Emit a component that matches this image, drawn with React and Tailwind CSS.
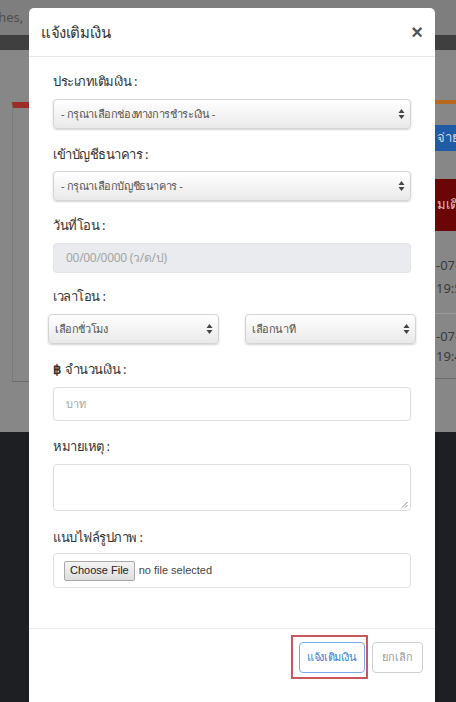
import React from 'react';

const font = { fontFamily: '"Noto Sans", "Liberation Sans", sans-serif' };

const Arrows = () => (
  <svg width="7" height="11" viewBox="0 0 7 11" className="absolute right-[5px] top-1/2 -translate-y-1/2">
    <path d="M3.5 0.5 L6.5 4.5 L0.5 4.5 Z" fill="#444" />
    <path d="M3.5 10.5 L6.5 6.5 L0.5 6.5 Z" fill="#444" />
  </svg>
);

const FakeSelect = ({ children, className = '' }) => (
  <div
    className={`relative flex h-[30px] items-center rounded-[4px] border border-[#d4d4d4] bg-gradient-to-b from-white to-[#e9e9e9] text-[11px] tracking-[-0.4px] text-[#555] shadow-[0_1px_2px_rgba(0,0,0,0.18)] ${className}`}
  >
    {children}
    <Arrows />
  </div>
);

const Label = ({ children, className = '' }) => (
  <div className={`h-5 text-[13px] leading-5 tracking-[-0.5px] text-[#333] ${className}`}>{children}</div>
);

export default function App() {
  return (
    <div className="relative flex h-[702px] w-[456px] flex-col overflow-hidden bg-[#878787]" style={font}>
      {/* dimmed page behind the modal */}
      <div className="flex h-[35px] items-center bg-[#7e7e7e] text-[13px] text-[#4f4f4f]">
        <span className="ml-[-24px]">clothes,</span>
      </div>
      <div className="h-[15px] bg-[#3f3f3f]" />
      <div className="flex h-[382px] justify-between bg-[#878787]">
        <div className="ml-[12px] mt-[52px] h-[280px] w-[120px] border-t-[6px] border-b border-l border-t-[#9d2b27] border-b-[#6c6c6c] border-l-[#7a7a7a]" />
        <div className="mt-[50px] w-[60px] border-t-4 border-t-[#b8681f] text-[13px]">
          <div className="mt-[21px] flex h-[26px] items-center bg-[#1f5ca6] pl-[41px] text-[#cfd8e6] whitespace-nowrap">จ่ายเงิน</div>
          <div className="mt-[28px] flex h-[52px] items-center bg-[#6a0606] pl-[41px] text-[#d9c2c2] whitespace-nowrap">มเติม</div>
          <div className="h-[83px] border-b border-[#9a9a9a] pl-[40px] pt-[24px] text-[#3a3a3a] whitespace-nowrap">
            <div className="leading-5">-07-15</div>
            <div className="mt-[3px] leading-5">19:50</div>
          </div>
          <div className="h-[65px] border-b border-[#6c6c6c] pl-[40px] pt-[12px] text-[#3a3a3a] whitespace-nowrap">
            <div className="leading-5">-07-15</div>
            <div className="leading-5">19:45</div>
          </div>
        </div>
      </div>
      <div className="flex-1 bg-[#1e1f23]" />

      {/* modal */}
      <div className="absolute left-[29px] top-[8px] h-[720px] w-[406px] rounded-t-[5px] bg-white">
        <div className="flex h-[49px] items-center justify-between border-b border-[#e9e9e9] pl-[12px] pr-[12px]">
          <span className="text-[15px] tracking-[-0.4px] text-[#333]">แจ้งเติมเงิน</span>
          <span className="text-[20px] font-bold leading-none text-[#555]" style={{ fontFamily: '"Liberation Sans", sans-serif' }}>×</span>
        </div>

        <div className="flex flex-col px-[24px] pb-[40px] pt-[14px]">
          <Label>ประเภทเติมเงิน :</Label>
          <FakeSelect className="mt-[8px] pl-[7px]">- กรุณาเลือกช่องทางการชำระเงิน -</FakeSelect>

          <Label className="mt-[15px]">เข้าบัญชีธนาคาร :</Label>
          <FakeSelect className="mt-[7px] pl-[7px]">- กรุณาเลือกบัญชีธนาคาร -</FakeSelect>

          <Label className="mt-[14px]">วันที่โอน :</Label>
          <div className="mt-[8px] flex h-[30px] items-center rounded-[4px] border border-[#e2e4e7] bg-[#e9ebee] pl-3 text-[12px] tracking-[-0.3px] text-[#a6a6a6]">
            00/00/0000 (ว/ด/ป)
          </div>

          <Label className="mt-[13px]">เวลาโอน :</Label>
          <div className="mx-[-5px] mt-[8px] flex gap-[26px]">
            <FakeSelect className="flex-1 pl-[6px]">เลือกชั่วโมง</FakeSelect>
            <FakeSelect className="flex-1 pl-[6px]">เลือกนาที</FakeSelect>
          </div>

          <Label className="mt-[15px]">
            <span className="mr-1 font-bold">฿</span>จำนวนเงิน :
          </Label>
          <div className="mt-[8px] flex h-[34px] items-center rounded-[4px] border border-[#dedede] pl-3 text-[11px] text-[#a6a6a6]">
            บาท
          </div>

          <Label className="mt-[15px]">หมายเหตุ :</Label>
          <div className="relative mt-[8px] h-[47px] rounded-[4px] border border-[#dedede]">
            <svg width="7" height="7" viewBox="0 0 7 7" className="absolute bottom-[2px] right-[2px]">
              <path d="M6.5 1 L1 6.5 M6.5 4 L4 6.5" stroke="#888" strokeWidth="1" />
            </svg>
          </div>

          <Label className="mt-[16px]">แนบไฟล์รูปภาพ :</Label>
          <div className="mt-[6px] flex h-[35px] items-center rounded-[4px] border border-[#e2e2e2] pl-[10px] text-[11px]" style={{ fontFamily: '"Liberation Sans", sans-serif' }}>
            <span className="flex h-[20px] items-center rounded-[2px] border border-[#a9a9a9] bg-gradient-to-b from-[#f4f4f4] to-[#dedede] px-[5px] text-[#222]">Choose File</span>
            <span className="ml-[4px] text-[#444]">no file selected</span>
          </div>
        </div>

        <div className="relative flex justify-end gap-[7px] border-t border-[#eeeeee] pr-[12px] pt-[13px]">
          <span className="flex h-[31px] w-[66px] items-center justify-center rounded-[4px] border border-[#79aaf0] text-[11px] tracking-[-0.4px] text-[#3c7fd6]">แจ้งเติมเงิน</span>
          <span className="flex h-[31px] w-[51px] items-center justify-center rounded-[4px] border border-[#cfcfcf] text-[11px] text-[#9a9a9a]">ยกเลิก</span>
          <div className="pointer-events-none absolute left-[262px] top-[6px] h-[44px] w-[77px] border-2 border-[#c9585e]" />
        </div>
      </div>
    </div>
  );
}
